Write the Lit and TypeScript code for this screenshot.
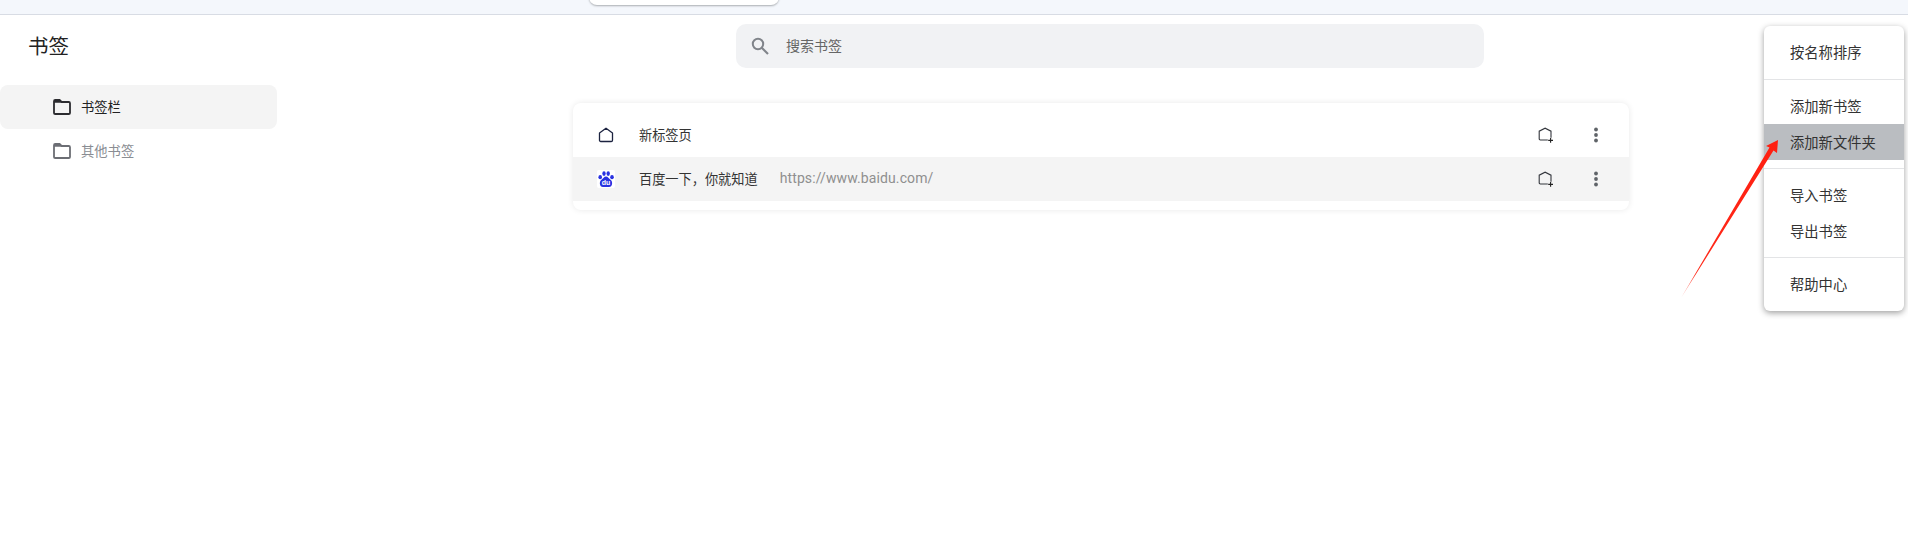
import { LitElement, html, css, svg } from "lit";
import { customElement } from "lit/decorators.js";

const folder = (color: string) => html`<svg class="folder" width="18" height="16" viewBox="0 0 18 16">
  <path d="M1 14V2.2C1 1.5 1.5 1 2.2 1H6.6L8.6 3H15.8C16.5 3 17 3.5 17 4.2V14C17 14.6 16.5 15 15.8 15H2.2C1.5 15 1 14.6 1 14Z" fill="none" stroke=${color} stroke-width="1.8"/>
  <path d="M1 1.5H6.4L8.4 3.8H1Z" fill=${color}/>
</svg>`;

const home = html`<svg width="16" height="16" viewBox="0 0 16 16"><path d="M1.5 6L8 1.2L14.5 6V13.2C14.5 14 14 14.5 13.2 14.5H2.8C2 14.5 1.5 14 1.5 13.2Z" fill="none" stroke="#1c2340" stroke-width="1.3" stroke-linejoin="round"/></svg>`;

const baidu = html`<svg width="18" height="18" viewBox="0 0 18 18" class="bd">
  <rect width="18" height="18" rx="2" fill="#fff"/>
  <g fill="#2932e1">
    <ellipse cx="3.2" cy="7.2" rx="1.8" ry="2.1"/>
    <ellipse cx="7" cy="3.6" rx="1.7" ry="2.3"/>
    <ellipse cx="11.2" cy="3.6" rx="1.7" ry="2.3"/>
    <ellipse cx="15" cy="7.2" rx="1.8" ry="2.1"/>
    <path d="M9 6.6C11 6.6 11.6 8.8 13.8 10C16 11.6 15.6 17 12 17H6C2.4 17 2 11.6 4.2 10C6.4 8.8 7 6.6 9 6.6Z"/>
  </g>
  <text x="9" y="15.4" text-anchor="middle" font-size="7" font-weight="700" font-family="Liberation Sans, sans-serif" fill="#fff">du</text>
</svg>`;

const addBm = html`<svg width="16" height="16" viewBox="0 0 16 16"><path d="M9.8 13H2.4C1.7 13 1.2 12.5 1.2 11.8V4.2L7.1 1.2L13 4.2V10.8" fill="none" stroke="#33363c" stroke-width="1.1"/><path d="M12.6 11V15.8M10.2 13.4H15" fill="none" stroke="#222" stroke-width="1.1"/></svg>`;

const dots = html`<svg width="4" height="16" viewBox="0 0 4 16"><circle cx="2" cy="2.5" r="1.9" fill="#5f6368"/><circle cx="2" cy="8" r="1.9" fill="#5f6368"/><circle cx="2" cy="13.5" r="1.9" fill="#5f6368"/></svg>`;

const arrowSvg = svg`<defs><linearGradient id="ar" gradientUnits="userSpaceOnUse" x1="0" y1="160" x2="97" y2="2">
  <stop offset="0" stop-color="#ff3a2a" stop-opacity=".35"/><stop offset=".15" stop-color="#ff2a1a"/><stop offset="1" stop-color="#ff1f10"/></linearGradient></defs>
  <path d="M0 160L88.5 9.5L85 8L97 2L96 15L92.5 12.5Z" fill="url(#ar)"/>`;

@customElement("app-root")
export class AppRoot extends LitElement {
  static styles = css`
    :host { display: block; position: relative; width: 1908px; height: 540px; overflow: hidden; background: #fff;
      font-family: Roboto, "Noto Sans CJK SC", sans-serif; color: #333; }
    .top { height: 14px; background: #f4f7fc; border-bottom: 1px solid #d8dce4; }
    .tab { position: absolute; left: 589px; top: -10px; width: 190px; height: 15px; background: #fff; border-radius: 0 0 8px 8px; box-shadow: 0 1px 2px rgba(60,64,67,.4); }
    .page { display: grid; grid-template-columns: 277px 1fr; }
    .side { padding-top: 19px; }
    h1 { margin: 0 0 25px 28px; font-size: 20.5px; line-height: 26px; font-weight: 400; color: #222; }
    .nav { display: flex; align-items: center; gap: 10px; height: 44px; padding-left: 53px; font-size: 13.3px; border-radius: 8px; color: #8a8d93; }
    .nav.on { background: #f4f4f4; color: #222; }
    .nav span, .row .t, .item span, .search span { padding-bottom: 2px; }
    .folder { display: block; flex: none; }
    .main { padding: 9px 0 0 296px; }
    .search { display: flex; align-items: center; gap: 17px; box-sizing: border-box; width: 748px; height: 44px; margin-left: 163px; padding-left: 15px; background: #f1f2f4; border-radius: 10px; font-size: 14px; color: #666; }
    .card { width: 1056px; margin-top: 35px; box-sizing: border-box; padding: 10px 0 9px; background: #fff; border-radius: 8px; box-shadow: 0 0 6px rgba(0,0,0,.09); }
    .row { display: flex; align-items: center; height: 44px; padding-left: 26px; font-size: 13.2px; color: #333; }
    .row.alt { background: #f4f4f4; }
    .ic { display: flex; justify-content: center; align-items: center; width: 14px; margin-right: 26px; flex: none; }
    .ic svg { flex: none; display: block; }
    .row .url { margin-left: 22px; color: #8f8f8f; font-size: 14px; letter-spacing: .11px; }
    .acts { margin-left: auto; display: flex; align-items: center; padding-right: 31px; gap: 40px; }
    .acts svg { display: block; }
    .menu { position: absolute; left: 1764px; top: 26px; width: 140px; box-sizing: border-box; padding: 8px 0 9px; background: #fff; border-radius: 6px; box-shadow: 0 2px 6px rgba(0,0,0,.38); font-size: 14.3px; color: #333; }
    .item { display: flex; align-items: center; height: 36px; padding-left: 26px; }
    .item.hi { background: #babdc1; }
    .sep { height: 1px; background: #e3e4e6; margin: 8px 0; }
    .sep.first { margin-top: 9px; }
    .arrow { position: absolute; left: 1681px; top: 138px; }
  `;

  render() {
    return html`
      <div class="top"></div>
      <div class="tab"></div>
      <div class="page">
        <aside class="side">
          <h1>书签</h1>
          <div class="nav on">${folder("#2b2b2f")}<span>书签栏</span></div>
          <div class="nav">${folder("#6c6e74")}<span>其他书签</span></div>
        </aside>
        <main class="main">
          <div class="search">
            <svg width="18" height="18" viewBox="0 0 18 18"><circle cx="7" cy="7" r="5.2" fill="none" stroke="#80848a" stroke-width="2"/><path d="M11 11L17 17" stroke="#80848a" stroke-width="2.2"/></svg>
            <span>搜索书签</span>
          </div>
          <div class="card">
            <div class="row">
              <span class="ic">${home}</span><span class="t">新标签页</span>
              <span class="acts">${addBm}${dots}</span>
            </div>
            <div class="row alt">
              <span class="ic">${baidu}</span><span class="t">百度一下，你就知道</span><span class="t url">https://www.baidu.com/</span>
              <span class="acts">${addBm}${dots}</span>
            </div>
          </div>
        </main>
      </div>
      <div class="menu">
        <div class="item"><span>按名称排序</span></div>
        <div class="sep first"></div>
        <div class="item"><span>添加新书签</span></div>
        <div class="item hi"><span>添加新文件夹</span></div>
        <div class="sep"></div>
        <div class="item"><span>导入书签</span></div>
        <div class="item"><span>导出书签</span></div>
        <div class="sep"></div>
        <div class="item"><span>帮助中心</span></div>
      </div>
      <svg class="arrow" width="98" height="161" viewBox="0 0 98 161">${arrowSvg}</svg>
    `;
  }
}
